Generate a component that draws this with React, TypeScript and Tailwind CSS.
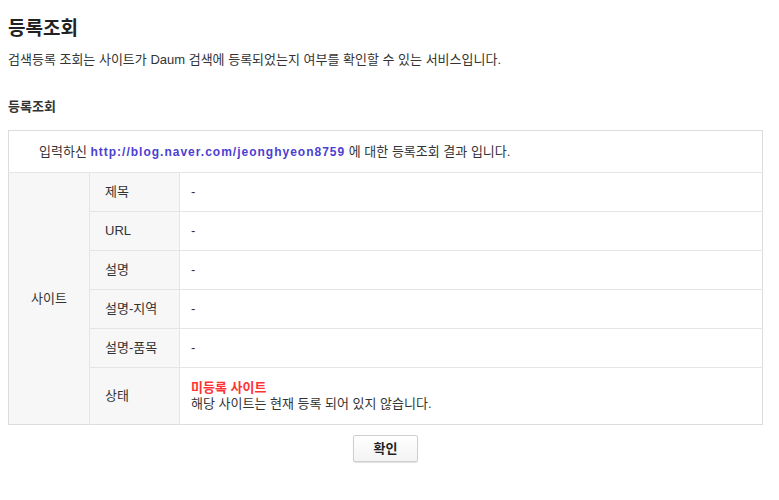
export default function App() {
  const rows = [
    { label: '제목', value: '-' },
    { label: 'URL', value: '-' },
    { label: '설명', value: '-' },
    { label: '설명-지역', value: '-' },
    { label: '설명-품목', value: '-' },
  ];

  return (
    <div className="min-h-[500px] w-[779px] bg-white px-[8px] pt-[14px] text-[13px] text-[#333] font-['Liberation_Sans','Noto_Sans_CJK_KR',sans-serif]">
      <h1 className="text-[19px] font-bold leading-[30px] text-[#222]">등록조회</h1>
      <p className="mt-[8px] leading-[16px] text-[#333]">
        검색등록 조회는 사이트가 Daum 검색에 등록되었는지 여부를 확인할 수 있는 서비스입니다.
      </p>

      <h2 className="mt-[31px] text-[13px] font-bold leading-[16px] text-[#333]">등록조회</h2>

      <table className="mt-[15px] w-[755px] border-collapse border border-[#dcdcdc] table-fixed">
        <colgroup>
          <col className="w-[81px]" />
          <col className="w-[90px]" />
          <col />
        </colgroup>
        <tbody>
          <tr className="h-[42px]">
            <td colSpan={3} className="border-b border-[#e5e5e5] pl-[30px] pt-[1px]">
              입력하신{' '}
              <span className="font-bold text-[#4b3fd1] text-[12px] tracking-[1px]">http://blog.naver.com/jeonghyeon8759</span> 에
              대한 등록조회 결과 입니다.
            </td>
          </tr>
          {rows.map((r, i) => (
            <tr key={r.label} className="h-[39px]">
              {i === 0 && (
                <td rowSpan={6} className="border-r border-[#e5e5e5] bg-[#f7f7f7] text-center align-middle">
                  사이트
                </td>
              )}
              <td className="border-r border-b border-[#e5e5e5] bg-[#f7f7f7] pl-[15px]">{r.label}</td>
              <td className="border-b border-[#e5e5e5] pl-[11px]">{r.value}</td>
            </tr>
          ))}
          <tr className="h-[57px]">
            <td className="border-r border-[#e5e5e5] bg-[#f7f7f7] pl-[15px]">상태</td>
            <td className="pl-[11px] leading-[16px]">
              <div className="font-bold text-[#ff3333]">미등록 사이트</div>
              <div>해당 사이트는 현재 등록 되어 있지 않습니다.</div>
            </td>
          </tr>
        </tbody>
      </table>

      <div className="mt-[10px] flex w-[755px] justify-center">
        <button className="h-[27px] w-[65px] rounded-[2px] border border-[#cfcfcf] bg-gradient-to-b from-white to-[#f3f3f3] text-[13px] font-bold text-[#222] shadow-[0_1px_1px_rgba(0,0,0,0.12)]">
          확인
        </button>
      </div>
    </div>
  );
}
